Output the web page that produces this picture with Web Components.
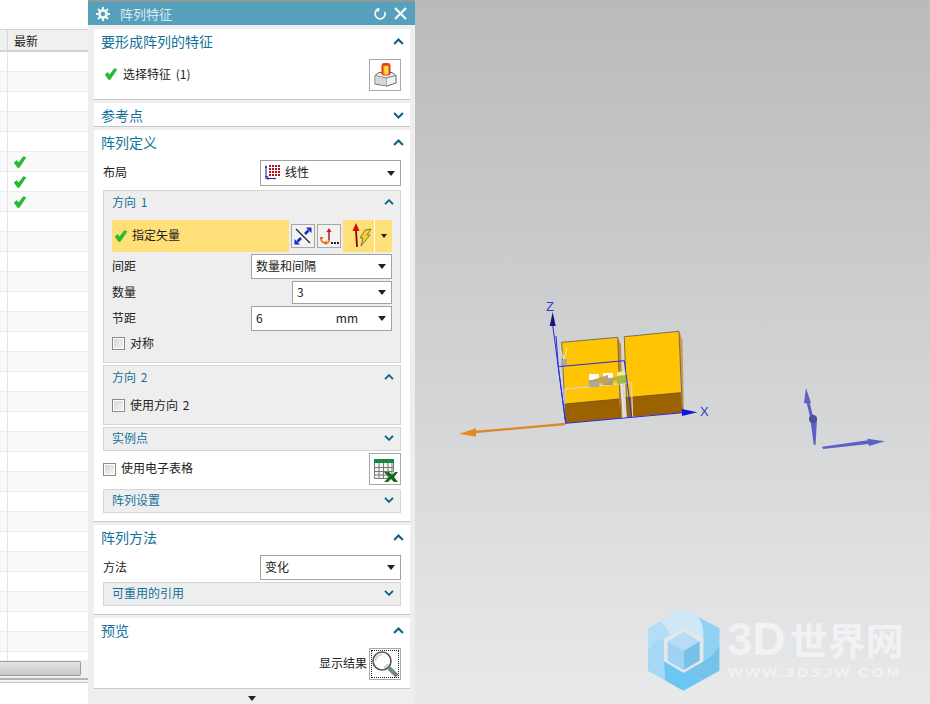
<!DOCTYPE html>
<html lang="zh">
<head>
<meta charset="utf-8">
<title>阵列特征</title>
<style>
    html, body { margin: 0; height: 100%; overflow: hidden; }
    body {
        display: flex;
        width: 930px;
        height: 704px;
        font: 12px/16px "Noto Sans CJK SC", "Noto Sans", sans-serif;
        color: #222;
    }
</style>
</head>
<body>
<history-pane></history-pane>

<nx-dialog heading="阵列特征">
    <nx-section heading="要形成阵列的特征">
        <nx-row>
            <span slot="label" style="display:flex;align-items:center;gap:6px;margin-left:2px;word-spacing:2px">
                <nx-tick></nx-tick>选择特征 (1)
            </span>
            <nx-button icon="feature"></nx-button>
        </nx-row>
    </nx-section>

    <nx-section heading="参考点" collapsed></nx-section>

    <nx-section heading="阵列定义">
        <nx-row style="margin-bottom:4px">
            <span slot="label">布局</span>
            <nx-select value="线性" icon="linear" style="width:141px;height:26px"></nx-select>
        </nx-row>
        <nx-group heading="方向 1" style="margin-bottom:2px">
            <vector-bar></vector-bar>
            <nx-row>
                <span slot="label">间距</span>
                <nx-select value="数量和间隔" style="width:141px;height:25px"></nx-select>
            </nx-row>
            <nx-row>
                <span slot="label">数量</span>
                <nx-select value="3" style="width:100px;height:23px"></nx-select>
            </nx-row>
            <nx-row>
                <span slot="label">节距</span>
                <nx-select value="6" unit="mm" style="width:141px;height:25px"></nx-select>
            </nx-row>
            <nx-check label="对称" style="margin-top:4px"></nx-check>
        </nx-group>
        <nx-group heading="方向 2" style="margin-bottom:2px">
            <nx-check label="使用方向 2" style="margin-top:4px"></nx-check>
        </nx-group>
        <nx-group heading="实例点" collapsed style="margin-bottom:2px"></nx-group>
        <nx-row style="margin-bottom:4px">
            <nx-check slot="label" label="使用电子表格"></nx-check>
            <nx-button icon="sheet"></nx-button>
        </nx-row>
        <nx-group heading="阵列设置" collapsed></nx-group>
    </nx-section>

    <nx-section heading="阵列方法">
        <nx-row style="margin-bottom:2px">
            <span slot="label">方法</span>
            <nx-select value="变化" style="width:141px;height:25px"></nx-select>
        </nx-row>
        <nx-group heading="可重用的引用" collapsed></nx-group>
    </nx-section>

    <nx-section heading="预览">
        <nx-row style="justify-content:flex-end;gap:2px">
            <span slot="label">显示结果</span>
            <nx-button icon="zoom" focused></nx-button>
        </nx-row>
    </nx-section>
</nx-dialog>

<nx-viewport>
    <nx-watermark></nx-watermark>
</nx-viewport>

<script>
const chevron = (up, w = 10, h = 6) => `
    <svg width="${w}" height="${h}" viewBox="0 0 10 6" style="display:block">
        <polyline points="${up ? '1,5.2 5,1.2 9,5.2' : '1,.8 5,4.8 9,.8'}" fill="none" stroke="#0c6485" stroke-width="1.9"/>
    </svg>`;

const icons = {
    feature: `<svg width="30" height="30" viewBox="0 0 30 30">
        <defs>
            <linearGradient id="cyl" x1="0" x2="1" y1="0" y2="0">
                <stop offset="0" stop-color="#e8280c"/><stop offset=".35" stop-color="#ffd820"/>
                <stop offset=".65" stop-color="#ffe860"/><stop offset="1" stop-color="#e8280c"/>
            </linearGradient>
        </defs>
        <path d="M5 15.5 L9 12.5 H22 L26 15.5 V23 L17 26 L5 24 Z" fill="#f2f2f2" stroke="#666"/>
        <path d="M5 15.5 L16 18 L26 15.5 M16 18 V26" fill="none" stroke="#777"/>
        <path d="M5.5 16 L16 18.5 V25.5 L5.5 23.5 Z" fill="#d8d8d8"/>
        <rect x="12" y="4" width="8" height="11" rx="1.5" fill="url(#cyl)" stroke="#e0300c"/>
        <ellipse cx="16" cy="4.4" rx="4" ry="1.4" fill="#e84018"/>
    </svg>`,
    sheet: `<svg width="30" height="30" viewBox="0 0 30 30">
        <rect x="4" y="5" width="20" height="4" fill="#138a43"/>
        <path d="M4.5 9 V24.5 H22 V9 M4.5 13.5 H23.5 M4.5 17.5 H23.5 M4.5 21 H23.5 M9 9 V24.5 M13.5 9 V24.5 M18 9 V24.5 M23.5 9 V17" fill="#f4f4f4" stroke="#777" stroke-width="1"/>
        <path d="M14 18 H19 L22 21 L25 18 H28 L24 23 L28 28 H24 L21 25 L18 28 H14 L19 23 Z" fill="#116b14"/>
    </svg>`,
    zoom: `<svg width="30" height="30" viewBox="0 0 30 30">
        <line x1="19" y1="19" x2="27" y2="27" stroke="#7d7d7d" stroke-width="4"/>
        <line x1="21" y1="21" x2="23.5" y2="23.5" stroke="#5fa06a" stroke-width="4"/>
        <circle cx="12" cy="12" r="9" fill="#fff" stroke="#555" stroke-width="1.6"/>
        <path d="M5.5 12 A6.5 6.5 0 0 1 12 5.5" fill="none" stroke="#c7d4ea" stroke-width="2"/>
        <path d="M18 15 A7 7 0 0 1 14 18.5" fill="none" stroke="#b8c4dc" stroke-width="1.6"/>
    </svg>`,
    flip: `<svg width="22" height="22" viewBox="0 0 22 22">
        <line x1="4" y1="4" x2="18" y2="18" stroke="#222" stroke-width="1.2"/>
        <path d="M13 9 L16.5 5.5" stroke="#0f2ad0" stroke-width="2.6"/>
        <path d="M14 2.5 H19.5 V8 Z" fill="#0f2ad0"/>
        <path d="M9 13 L5.5 16.5" stroke="#0f2ad0" stroke-width="2.6"/>
        <path d="M2.5 14 V19.5 H8 Z" fill="#0f2ad0"/>
    </svg>`,
    more: `<svg width="22" height="22" viewBox="0 0 22 22">
        <path d="M3 13 Q3 18 8 18 Q11 18 11 15" fill="none" stroke="#e8842a" stroke-width="1.8"/>
        <path d="M1.5 12 L3.5 15 L5.5 12 Z M8.5 15.5 L8.5 20 L5.5 18 Z" fill="#e0601c"/>
        <line x1="11" y1="6" x2="11" y2="15" stroke="#b01010" stroke-width="1.4"/>
        <path d="M8.5 7 L11 3 L13.5 7 Z" fill="#d81414"/>
        <path d="M13 17h2v2h-2z M16 17h2v2h-2z M19 17h2v2h-2z" fill="#222"/>
    </svg>`,
    bolt: `<svg width="31" height="32" viewBox="0 0 31 32">
        <line x1="13" y1="10" x2="14" y2="27" stroke="#7a0a0a" stroke-width="1.8"/>
        <path d="M9.5 11 L13 3 L16.5 11 Z" fill="#c8100c"/>
        <path d="M22 10 L28 9 L24 15 L27 15 L18 26 L20 18 L17 18 Z" fill="#f4d23c" stroke="#6f6a4a" stroke-width=".9"/>
    </svg>`,
    linear: `<svg width="16" height="16" viewBox="0 0 16 16">
        <path d="M1 2 V14.5 H10" fill="none" stroke="#1c2a9c" stroke-width="1.1"/>
        <path d="M0 4 L1 1 L2 4 Z M9 13.4 L11.5 14.5 L9 15.6 Z" fill="#1c2a9c"/>
        <path d="M0 12.5 h3 M3 13 v3" stroke="#1c2a9c" stroke-width=".9"/>
        <g fill="#b40f14">
            <rect x="4" y="1" width="2" height="2"/><rect x="7" y="1" width="2" height="2"/><rect x="10" y="1" width="2" height="2"/><rect x="13" y="1" width="2" height="2"/>
            <rect x="4" y="4" width="2" height="2"/><rect x="7" y="4" width="2" height="2"/><rect x="10" y="4" width="2" height="2"/><rect x="13" y="4" width="2" height="2"/>
            <rect x="4" y="7" width="2" height="2"/><rect x="7" y="7" width="2" height="2"/><rect x="10" y="7" width="2" height="2"/><rect x="13" y="7" width="2" height="2"/>
            <rect x="4" y="10" width="2" height="2"/><rect x="7" y="10" width="2" height="2"/><rect x="10" y="10" width="2" height="2"/><rect x="13" y="10" width="2" height="2"/>
        </g>
    </svg>`
};

// Green tick used in the dialog and the table
class NxTick extends HTMLElement {
    constructor() {
        super();
        this.attachShadow({ mode: 'open' });
        this.shadowRoot.innerHTML = `
            <style>:host { display: inline-block; width: 12px; height: 12px; flex: none; } svg { display: block; }</style>
            <svg width="12" height="12" viewBox="0 0 12 12">
                <path d="M0 6.5 L2.8 4.4 L4.6 6.8 L9.4 .6 L12 1.4 L5.2 11.6 L3.6 11.6 Z" fill="#1fc02c" stroke="#139a22" stroke-width=".4"/>
            </svg>`;
    }
}
customElements.define('nx-tick', NxTick);

// Table on the left, mostly cut off by the dialog
class HistoryPane extends HTMLElement {
    constructor() {
        super();
        this.attachShadow({ mode: 'open' });
    }

    connectedCallback() {
        const rows = [];
        for (let i = 0; i < 31; i++) {
            const tick = i >= 5 && i <= 7 ? '<nx-tick></nx-tick>' : '';
            rows.push(`<div class="row ${i % 2 ? 'odd' : ''}"><i></i><b>${tick}</b></div>`);
        }
        this.shadowRoot.innerHTML = `
            <style>
                :host { display: flex; flex-direction: column; width: 88px; flex: none; height: 704px; background: #fff; overflow: hidden; }
                .top { height: 29px; flex: none; }
                .head { display: flex; height: 20px; flex: none; background: #f0f0f0; border-top: 1px solid #d0d0d0; border-bottom: 2px solid #d2d2d2; line-height: 21px; }
                .head i { width: 7px; border-right: 1px solid #d8d8d8; }
                .head span { margin-left: 6px; }
                .rows { height: 608px; flex: none; overflow: hidden; }
                .row { display: flex; height: 19px; border-bottom: 1px solid #ececec; }
                .row.odd { background: #f9f9f9; }
                .row i { width: 7px; border-right: 1px solid #e4e4e4; }
                .row b { display: flex; align-items: center; padding-left: 6px; }
                .gutter { display: flex; height: 18px; flex: none; box-sizing: border-box; background: #f0f0f0; padding: 1px 7px 2px 0; }
                .thumb { flex: 1; border: 1px solid #9a9a9a; border-left: 0; border-radius: 0 2px 2px 0; background: linear-gradient(#e4e4e4, #c8c8c8); }
                .lines { height: 5px; flex: none; border-top: 2px solid #b4b4b4; border-bottom: 1px solid #c4c4c4; background: #f2f2f2; box-sizing: border-box; }
            </style>
            <div class="top"></div>
            <div class="head"><i></i><span>最新</span></div>
            <div class="rows">${rows.join('')}</div>
            <div class="gutter"><div class="thumb"></div></div>
            <div class="lines"></div>`;
    }
}
customElements.define('history-pane', HistoryPane);

class NxDialog extends HTMLElement {
    constructor() {
        super();
        this.attachShadow({ mode: 'open' });
    }

    connectedCallback() {
        this.shadowRoot.innerHTML = `
            <style>
                :host { display: flex; flex-direction: column; width: 327px; flex: none; height: 704px; box-sizing: border-box; background: #eee; border-top: 2px solid #8f9a9f; }
                .title { display: flex; align-items: center; height: 23px; flex: none; background: #56a0bc; color: #dcebf1; font-size: 13px; padding: 0 8px 0 8px; }
                .title .gear { margin-right: 10px; }
                .title span { flex: 1; }
                .title svg { display: block; }
                .body { flex: 1; display: flex; flex-direction: column; gap: 3px; padding: 4px 5px 0 6px; }
                ::slotted(nx-section) { flex: none; }
                .foot { display: flex; justify-content: center; align-items: center; height: 15px; box-sizing: border-box; padding-top: 3px; flex: none; }
                .foot i { width: 0; height: 0; border: 4.5px solid transparent; border-top: 5px solid #222; border-bottom: 0; }
            </style>
            <div class="title">
                <svg class="gear" width="14" height="14" viewBox="0 0 14 14">
                    <circle cx="7" cy="7" r="3.6" fill="none" stroke="#f2f7f9" stroke-width="2.6"/>
                    <path d="M7 0 V14 M0 7 H14 M2 2 L12 12 M12 2 L2 12" stroke="#f2f7f9" stroke-width="2" stroke-dasharray="2.4 9.2 2.4 0"/>
                </svg>
                <span>${this.getAttribute('heading')}</span>
                <svg width="14" height="14" viewBox="0 0 14 14" style="margin-right:7px">
                    <path d="M4 2.8 A5 5 0 1 0 10 2.8" fill="none" stroke="#f2f7f9" stroke-width="1.7" transform="rotate(30 7 7)"/>
                    <path d="M5.6 .6 L2 3 L6.2 5 Z" fill="#f2f7f9"/>
                </svg>
                <svg width="13" height="13" viewBox="0 0 13 13">
                    <path d="M1 1 L12 12 M12 1 L1 12" stroke="#f6fafb" stroke-width="2.2"/>
                </svg>
            </div>
            <div class="body"><slot></slot></div>
            <div class="foot"><i></i></div>`;
    }
}
customElements.define('nx-dialog', NxDialog);

// White collapsible block of the dialog
class NxSection extends HTMLElement {
    constructor() {
        super();
        this.attachShadow({ mode: 'open' });
    }

    connectedCallback() {
        const collapsed = this.hasAttribute('collapsed');
        this.shadowRoot.innerHTML = `
            <style>
                :host { display: block; background: #fff; border-bottom: 1px solid #c8c8c8; }
                .head { display: flex; align-items: center; justify-content: space-between; height: 26px; box-sizing: border-box; padding: 0 6px 2px 7px; font-size: 14px; color: #11729a; }
                :host([collapsed]) .head { height: 23px; padding-top: 1px; padding-bottom: 0; }
                .body { display: flex; flex-direction: column; padding: 4px 9px 8px; }
                :host([collapsed]) .body { display: none; }
            </style>
            <div class="head"><span>${this.getAttribute('heading')}</span>${chevron(!collapsed, 11, 7)}</div>
            <div class="body"><slot></slot></div>`;
    }
}
customElements.define('nx-section', NxSection);

// Grey nested block inside a section
class NxGroup extends HTMLElement {
    constructor() {
        super();
        this.attachShadow({ mode: 'open' });
    }

    connectedCallback() {
        const collapsed = this.hasAttribute('collapsed');
        this.shadowRoot.innerHTML = `
            <style>
                :host { display: block; background: #eee; border: 1px solid #d6d6d6; }
                .head { display: flex; align-items: center; justify-content: space-between; height: 22px; box-sizing: border-box; padding: 0 6px 0 8px; color: #11729a; word-spacing: 2px; }
                :host([collapsed]) .head { padding-bottom: 2px; }
                .body { display: flex; flex-direction: column; gap: 2px; padding: 7px 8px 12px; }
                :host([collapsed]) .body { display: none; }
            </style>
            <div class="head"><span>${this.getAttribute('heading')}</span>${chevron(!collapsed)}</div>
            <div class="body"><slot></slot></div>`;
    }
}
customElements.define('nx-group', NxGroup);

// One form line: a label on the left, a control on the right
class NxRow extends HTMLElement {
    constructor() {
        super();
        this.attachShadow({ mode: 'open' });
        this.shadowRoot.innerHTML = `
            <style>
                :host { display: flex; align-items: center; justify-content: space-between; }
                ::slotted(span[slot="label"]) { margin-bottom: 2px; }
            </style>
            <slot name="label"></slot><slot></slot>`;
    }
}
customElements.define('nx-row', NxRow);

class NxSelect extends HTMLElement {
    constructor() {
        super();
        this.attachShadow({ mode: 'open' });
    }

    connectedCallback() {
        const icon = this.getAttribute('icon');
        const unit = this.getAttribute('unit');
        this.shadowRoot.innerHTML = `
            <style>
                :host { display: flex; align-items: center; box-sizing: border-box; background: #fff; border: 1px solid #a2a2a2; padding: 0 4px; flex: none; }
                .icon { display: block; margin-right: 4px; }
                .value { flex: 1; margin-bottom: 2px; }
                .unit { margin-right: 20px; margin-bottom: 1px; }
                i { width: 0; height: 0; margin-right: 1px; border: 4.5px solid transparent; border-top: 5px solid #222; border-bottom: 0; }
            </style>
            ${icon ? `<span class="icon">${icons[icon]}</span>` : ''}
            <span class="value">${this.getAttribute('value')}</span>
            ${unit ? `<span class="unit">${unit}</span>` : ''}
            <i></i>`;
    }
}
customElements.define('nx-select', NxSelect);

class NxCheck extends HTMLElement {
    constructor() {
        super();
        this.attachShadow({ mode: 'open' });
    }

    connectedCallback() {
        this.shadowRoot.innerHTML = `
            <style>
                :host { display: flex; align-items: center; gap: 5px; height: 13px; word-spacing: 2px; }
                i { width: 13px; height: 13px; box-sizing: border-box; flex: none; border: 1px solid #8a8a8a; background: linear-gradient(135deg, #d4d4d4, #f6f6f6); box-shadow: inset 0 0 0 1px #fff; }
                span { margin-bottom: 2px; }
            </style>
            <i></i><span>${this.getAttribute('label')}</span>`;
    }
}
customElements.define('nx-check', NxCheck);

class NxButton extends HTMLElement {
    constructor() {
        super();
        this.attachShadow({ mode: 'open' });
    }

    connectedCallback() {
        this.shadowRoot.innerHTML = `
            <style>
                :host { display: flex; align-items: center; justify-content: center; position: relative; width: 32px; height: 32px; box-sizing: border-box; flex: none; background: #fff; border: 1px solid #a8a8a8; }
                :host([small]) { width: 24px; height: 24px; background: #f2f2f2; }
                :host([focused])::after { content: ""; position: absolute; inset: 1px; border: 1px dotted #222; }
                svg { display: block; }
            </style>
            ${icons[this.getAttribute('icon')]}`;
    }
}
customElements.define('nx-button', NxButton);

// Yellow "specify vector" selection step with its buttons
class VectorBar extends HTMLElement {
    constructor() {
        super();
        this.attachShadow({ mode: 'open' });
    }

    connectedCallback() {
        this.shadowRoot.innerHTML = `
            <style>
                :host { display: flex; align-items: center; gap: 2px; height: 32px; }
                .step { display: flex; align-items: center; gap: 5px; width: 177px; height: 32px; box-sizing: border-box; padding-left: 3px; background: #ffdf77; }
                .step span { margin-bottom: 2px; }
                .drop { display: flex; align-items: center; width: 49px; height: 32px; margin-left: 0; background: #ffdf77; }
                .drop svg { display: block; }
                .drop u { width: 1px; height: 32px; background: #fff; }
                .drop i { width: 0; height: 0; margin-left: 6px; border: 3.5px solid transparent; border-top: 4px solid #222; border-bottom: 0; }
            </style>
            <div class="step"><nx-tick></nx-tick><span>指定矢量</span></div>
            <nx-button small icon="flip"></nx-button>
            <nx-button small icon="more"></nx-button>
            <div class="drop">${icons.bolt}<u></u><i></i></div>`;
    }
}
customElements.define('vector-bar', VectorBar);

// Graphics window: coordinates of the drawing are page pixels
class NxViewport extends HTMLElement {
    constructor() {
        super();
        this.attachShadow({ mode: 'open' });
    }

    connectedCallback() {
        this.shadowRoot.innerHTML = `
            <style>
                :host { display: block; position: relative; flex: 1; height: 704px; overflow: hidden; background: linear-gradient(#b8babb, #e8e9eb); }
                svg { display: block; position: absolute; inset: 0; }
                text { font-family: "Liberation Sans", sans-serif; font-size: 13px; fill: #2b3ad6; }
            </style>
            <svg width="515" height="704" viewBox="415 0 515 704">
                <!-- orange strips beside the blocks -->
                <path d="M617.5 337 L621 345 L622.5 417 L620.5 418 Z" fill="#c98a2c"/>
                <path d="M679 331 L682.5 340 L684 412 L682 412.5 Z" fill="#d19a4a"/>
                <path d="M624 337 L626 398 L627 417 L625 417 L622 345 Z" fill="#d8d8d4"/>

                <!-- left block -->
                <polygon points="561.7,342.3 617.7,337.3 619.3,399 565,404" fill="#ffc403"/>
                <polygon points="565,404 619.3,399 620.7,418.3 565.7,423.3" fill="#9c6200"/>
                <polyline points="565.7,423.3 561.7,342.3 617.7,337.3 620.7,418.3" fill="none" stroke="#5d5a4a" stroke-width=".8"/>
                <line x1="565" y1="404" x2="619.3" y2="399" stroke="#6b4a10" stroke-width=".8"/>

                <!-- right block -->
                <polygon points="624.3,336.7 679,331.3 680.7,392.7 625.7,397.7" fill="#ffc403"/>
                <polygon points="625.7,397.7 680.7,392.7 682.3,412.7 627.3,417.3" fill="#9c6200"/>
                <polyline points="627.3,417.3 624.3,336.7 679,331.3 682.3,412.7" fill="none" stroke="#5d5a4a" stroke-width=".8"/>
                <line x1="625.7" y1="397.7" x2="680.7" y2="392.7" stroke="#6b4a10" stroke-width=".8"/>

                <!-- pale outline of the pattern -->
                <path d="M565 389 L631.5 382.7 L632.5 417 M565 389 V404" fill="none" stroke="#d8d4c4" stroke-width="1.3"/>
                <path d="M620 372 L624 418" stroke="#e8e4d4" stroke-width="2"/>
                <path d="M560 349 L564 360 M567 348 L564 360" stroke="#e8e8e8" stroke-width="1"/>
                <rect x="561" y="359" width="6" height="7" fill="#a8a8a8"/>

                <!-- small features in the middle -->
                <rect x="589" y="374" width="10" height="6" fill="#fafafa"/>
                <rect x="589" y="380" width="10" height="7" fill="#a8a8a0"/>
                <rect x="603" y="373" width="10" height="5" fill="#fafafa"/>
                <rect x="603" y="378" width="10" height="7" fill="#a09c8c"/>
                <polygon points="589,381 608,375 608,378 620,377 620,380 608,381 607,384" fill="#b8a468"/>
                <polygon points="617,372 627,371 627,375 617,376" fill="#f0f27a"/>
                <polygon points="617,376 627,375 627,383 617,384" fill="#a8b84a"/>

                <!-- csys and selection box -->
                <g fill="none" stroke="#2a2ae4" stroke-width="1">
                    <path d="M558.3 366.7 L624.3 360.7 L631.7 416.7"/>
                    <path d="M558.3 366.7 L565.7 423.3"/>
                    <path d="M552.7 325 L565.7 423.3"/>
                    <path d="M565.7 423.3 L683 412.7"/>
                    <path d="M556 336 L558.3 366.7"/>
                </g>
                <polygon points="552.7,312 555.7,326 549.7,326" fill="#15157c"/>
                <polygon points="682,409 697.3,412.3 682,416" fill="#1414e0"/>
                <text x="546" y="311">Z</text>
                <text x="700" y="416">X</text>

                <!-- orange direction arrow -->
                <line x1="565" y1="424" x2="472" y2="432.3" stroke="#d98a2c" stroke-width="2.4"/>
                <polygon points="459.3,433.7 476,428.3 476,436.7" fill="#e88a1e"/>

                <!-- view triad -->
                <g fill="#5d60c4">
                    <polygon points="806,388 811,403 809.8,403 812.5,414 817,419 815.5,445 813.8,445 810,417 806.8,403.5 804,403"/>
                    <circle cx="813" cy="419" r="4" fill="#4c4f9e"/>
                    <polygon points="822,446.8 868,440.3 867,438.8 885,441.3 869,446 868.5,444 823,449"/>
                </g>
            </svg>
            <slot></slot>`;
    }
}
customElements.define('nx-viewport', NxViewport);

// Site logo lying over the graphics window
class NxWatermark extends HTMLElement {
    constructor() {
        super();
        this.attachShadow({ mode: 'open' });
        this.shadowRoot.innerHTML = `
            <style>
                :host { display: block; position: absolute; left: 231px; top: 607px; width: 270px; height: 84px; }
                svg { display: block; position: absolute; left: 0; top: 0; }
                .name { position: absolute; left: 81px; top: 12px; display: flex; align-items: center; gap: 4px; font: 700 38px/40px "Noto Sans CJK SC", sans-serif; color: #f1f2f4; white-space: nowrap; }
                .name b { font: 700 46px/40px "Liberation Sans", sans-serif; }
                .url { position: absolute; left: 82px; top: 59px; font: 700 12.5px/14px "Liberation Sans", sans-serif; letter-spacing: 2px; color: #f1f2f4; white-space: nowrap; transform: scaleX(1.25); transform-origin: left center; }
            </style>
            <svg width="76" height="84" viewBox="47 21 228 252">
                <polygon points="159,27 267,85 267,212 159,272 53,212 53,85" fill="#b5def6"/>
                <path d="M90,66 L159,27 L205,52 Q224,85 219,116 L160,82 L118,106 Q110,80 90,66Z" fill="#cfe7f6"/>
                <path d="M205,52 L267,85 L267,135 Q250,170 219,184 V116 Q224,85 205,52Z" fill="#8fd2f3"/>
                <path d="M267,135 V212 L215,241 Q185,225 160,218 L219,184 Q250,170 267,135Z" fill="#76c3ea"/>
                <path d="M215,241 L159,272 L103,240 L101,184 L160,218 Q185,225 215,241Z" fill="#6cc6f3"/>
                <path d="M103,240 L53,212 V150 Q75,115 101,116 V184 Z" fill="#a5d8f5"/>
                <path d="M53,150 V85 L90,66 Q110,80 118,106 L101,116 Q75,115 53,150Z" fill="#b5def6"/>
                <polygon points="160,82 219,116 219,184 160,218 101,184 101,116" fill="#e6e7e9"/>
                <polygon points="160,95 208,124 160,152 112,124" fill="#b7ddf6"/>
                <polygon points="112,124 160,152 160,210 112,182" fill="#a0d3f3"/>
                <polygon points="208,124 208,182 160,210 160,152" fill="#78c0e8"/>
            </svg>
            <div class="name"><b>3D</b><span>世界网</span></div>
            <div class="url">WWW.3DSJW.COM</div>`;
    }
}
customElements.define('nx-watermark', NxWatermark);
</script>
</body>
</html>
